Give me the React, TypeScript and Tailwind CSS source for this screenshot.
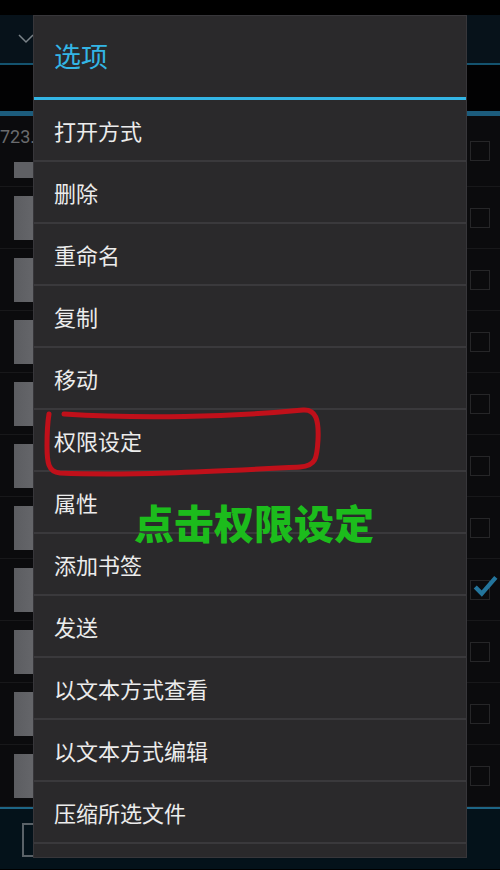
const items = [
  '打开方式',
  '删除',
  '重命名',
  '复制',
  '移动',
  '权限设定',
  '属性',
  '添加书签',
  '发送',
  '以文本方式查看',
  '以文本方式编辑',
  '压缩所选文件',
]

const cjk = { fontFamily: '"Noto Sans CJK SC", "Noto Sans", sans-serif' }

function Checkbox({ checked }: { checked?: boolean }) {
  return (
    <div className="relative h-[20px] w-[20px] border border-[#262628]">
      {checked && (
        <svg viewBox="0 0 24 24" className="absolute -top-[8px] left-[1px] h-[26px] w-[26px]">
          <path d="M3 13 L9 19 L22 4" fill="none" stroke="#24759c" strokeWidth="4" />
        </svg>
      )}
    </div>
  )
}

function BackgroundRow({ checked }: { checked?: boolean }) {
  return (
    <div className="flex h-[62px] items-center justify-between border-b border-[#18181a] bg-[#0b0b0d] pl-[14px] pr-[10px]">
      <div className="h-[44px] w-[40px] bg-gradient-to-r from-[#5c5d61] to-[#6e6f73]" />
      <Checkbox checked={checked} />
    </div>
  )
}

export default function App() {
  return (
    <div className="relative h-[870px] w-[500px] overflow-hidden bg-black" style={cjk}>
      {/* screen behind the dialog */}
      <div className="h-[15px] bg-black" />
      <div className="flex h-[50px] items-center border-b-2 border-[#14536f] bg-[#07121a] pl-[18px]">
        <svg viewBox="0 0 16 10" className="h-[10px] w-[16px]">
          <path d="M1 1 L8 8 L15 1" fill="none" stroke="#7a8288" strokeWidth="1.5" />
        </svg>
      </div>
      <div className="h-[46px] bg-[#020203]" />
      <div className="h-[5px] bg-[#1c5c7c]" />
      <div className="flex h-[71px] items-center justify-between border-b border-[#18181a] bg-[#0b0b0d] pr-[10px]">
        <div className="flex h-full flex-col justify-between pt-[12px] pb-[8px]">
          <span className="text-[18px] leading-none text-[#6a6b6e]" style={{ fontFamily: '"Roboto", sans-serif' }}>
            723.
          </span>
          <div className="ml-[14px] h-[16px] w-[40px] bg-[#5f6064]" />
        </div>
        <Checkbox />
      </div>
      {Array.from({ length: 10 }).map((_, i) => (
        <BackgroundRow key={i} checked={i === 6} />
      ))}
      <div className="h-[62px] border-t-2 border-[#1d6585] bg-[#04121a] pl-[22px] pt-[14px]">
        <div className="h-[34px] w-[24px] border-2 border-[#5a6268]" />
      </div>

      {/* options dialog */}
      <div className="absolute left-[33px] top-[15px] w-[434px] border border-[#37363a] bg-[#2a292b] pb-[13px]">
        <div className="flex h-[81px] items-center pl-[20px] text-[27px] text-[#33b5e5]">选项</div>
        <div className="h-[3px] bg-[#33b5e5]" />
        {items.map((label) => (
          <div
            key={label}
            className="flex h-[62px] items-center border-b-2 border-[#3a393c] pl-[20px] text-[22px] text-[#ececec]"
          >
            {label}
          </div>
        ))}
      </div>

      {/* annotation */}
      <svg className="pointer-events-none absolute left-0 top-0" width="500" height="870" viewBox="0 0 500 870">
        <path
          d="M64 414 C 140 419, 230 417, 303 410 C 316 409, 319 420, 318 440 C 317 458, 316 466, 300 467 C 220 471, 130 476, 60 473 C 48 472, 47 462, 47 446 C 47 430, 48 420, 49 414"
          fill="none"
          stroke="#c0101a"
          strokeWidth="5"
          strokeLinecap="round"
        />
      </svg>
      <div className="absolute left-[134px] top-[502px] text-[40px] font-black leading-none text-[#1cbc1c]">
        点击权限设定
      </div>
    </div>
  )
}
